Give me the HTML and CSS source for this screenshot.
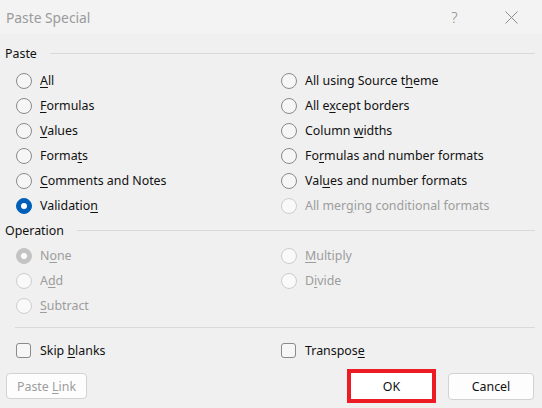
FILE: index.html
```html
<!DOCTYPE html>
<html>
<head>
<meta charset="utf-8">
<link rel="stylesheet" href="styles.css">
</head>
<body>
<div class="dialog">
  <div class="titlebar">
    <span class="title">Paste Special</span>
    <span class="cap help">?</span>
    <span class="cap close"><svg width="13" height="13" viewBox="0 0 13 13"><path d="M0.5 0.5 L12.5 12.5 M12.5 0.5 L0.5 12.5" stroke="#8c8c8c" stroke-width="1" fill="none"/></svg></span>
  </div>

  <div class="group-head paste-head"><span>Paste</span></div>
  <div class="opts">
    <div class="opt"><span class="radio"></span><span><u>A</u>ll</span></div>
    <div class="opt"><span class="radio"></span><span>All using Source t<u>h</u>eme</span></div>
    <div class="opt"><span class="radio"></span><span><u>F</u>ormulas</span></div>
    <div class="opt"><span class="radio"></span><span>All e<u>x</u>cept borders</span></div>
    <div class="opt"><span class="radio"></span><span><u>V</u>alues</span></div>
    <div class="opt"><span class="radio"></span><span>Column <u>w</u>idths</span></div>
    <div class="opt"><span class="radio"></span><span>Forma<u>t</u>s</span></div>
    <div class="opt"><span class="radio"></span><span>Fo<u>r</u>mulas and number formats</span></div>
    <div class="opt"><span class="radio"></span><span><u>C</u>omments and Notes</span></div>
    <div class="opt"><span class="radio"></span><span>Val<u>u</u>es and number formats</span></div>
    <div class="opt"><span class="radio checked"></span><span>Validatio<u>n</u></span></div>
    <div class="opt disabled"><span class="radio"></span><span>All mer<u>g</u>ing conditional formats</span></div>
  </div>

  <div class="group-head op-head"><span>Operation</span></div>
  <div class="opts">
    <div class="opt disabled"><span class="radio checked"></span><span>N<u>o</u>ne</span></div>
    <div class="opt disabled"><span class="radio"></span><span><u>M</u>ultiply</span></div>
    <div class="opt disabled"><span class="radio"></span><span>A<u>d</u>d</span></div>
    <div class="opt disabled"><span class="radio"></span><span>D<u>i</u>vide</span></div>
    <div class="opt disabled"><span class="radio"></span><span><u>S</u>ubtract</span></div>
  </div>

  <div class="sep"></div>

  <div class="opts checks">
    <div class="opt"><span class="check"></span><span>Skip <u>b</u>lanks</span></div>
    <div class="opt"><span class="check"></span><span>Transpos<u>e</u></span></div>
  </div>

  <div class="buttons">
    <button class="btn disabled-btn">Paste <u>L</u>ink</button>
    <span class="spacer"></span>
    <button class="btn ok">OK</button>
    <button class="btn cancel">Cancel</button>
  </div>
</div>
</body>
</html>
```

FILE: styles.css
```css
html, body {
  margin: 0;
  padding: 0;
}
body {
  width: 542px;
  height: 408px;
  background: #f0f0f0;
  font-family: "Segoe UI", "Noto Sans", "Open Sans", sans-serif;
  font-size: 12.4px;
  color: #111;
  overflow: hidden;
}
.dialog {
  width: 542px;
  height: 408px;
  background: #f0f0f0;
}
u {
  text-decoration: underline;
  text-decoration-thickness: 1px;
  text-underline-offset: 2px;
}
.titlebar {
  height: 34px;
  background: #f3f3f3;
  display: flex;
  align-items: center;
  padding-left: 6px;
  padding-right: 2px;
}
.title {
  flex: 1;
  font-size: 13.8px;
  color: #9a9a9a;
}
.cap {
  width: 57px;
  height: 34px;
  display: flex;
  align-items: center;
  justify-content: center;
  color: #8c8c8c;
}
.help {
  font-size: 15px;
  font-weight: 300;
}
.group-head {
  display: flex;
  align-items: center;
  height: 18px;
  padding-left: 5px;
  padding-right: 7px;
}
.group-head::after {
  content: "";
  flex: 1;
  border-top: 1px solid #d9d9d9;
  margin-left: 13px;
}
.paste-head {
  margin-top: 10px;
}
.op-head {
  margin-top: 3px;
}
.opts {
  display: grid;
  grid-template-columns: 265px 1fr;
  grid-auto-rows: 25px;
  padding-left: 16px;
  margin-top: 6px;
}
.op-head + .opts {
  margin-top: 4px;
}
.opt {
  display: flex;
  align-items: center;
  white-space: nowrap;
}
.radio {
  width: 14px;
  height: 14px;
  border: 1px solid #8a8a8a;
  border-radius: 50%;
  background: #f6f6f6;
  margin-right: 8px;
  flex: none;
  position: relative;
}
.radio.checked {
  background: #005fb8;
  border-color: #005fb8;
}
.radio.checked::after {
  content: "";
  position: absolute;
  left: 4px;
  top: 4px;
  width: 6px;
  height: 6px;
  border-radius: 50%;
  background: #fff;
}
.disabled {
  color: #9d9d9d;
}
.disabled .radio {
  border-color: #cdcdcd;
  background: #f9f9f9;
}
.disabled .radio.checked {
  background: #c3c3c3;
  border-color: #c3c3c3;
}
.sep {
  margin: 9px 7px 0 15px;
  border-top: 1px solid #d9d9d9;
}
.checks {
  margin-top: 10px;
}
.check {
  width: 13px;
  height: 13px;
  border: 1px solid #8a8a8a;
  border-radius: 3px;
  background: #f6f6f6;
  margin-right: 9px;
  flex: none;
}
.buttons {
  display: flex;
  align-items: center;
  height: 34px;
  margin-top: 6px;
  padding-left: 6px;
  padding-right: 8px;
}
.spacer {
  flex: 1;
}
.btn {
  font-family: inherit;
  font-size: 12.4px;
  height: 27px;
  border: 1px solid #d2d2d2;
  border-radius: 4px;
  background: #fdfdfd;
  color: #111;
  padding: 0;
}
.disabled-btn {
  width: 81px;
  height: 26px;
  color: #9d9d9d;
}
.ok {
  width: 89px;
  height: 34px;
  border: 4px solid #ed1c24;
  border-radius: 0;
  background: #fff;
  margin-right: 12px;
}
.cancel {
  width: 86px;
}
```
